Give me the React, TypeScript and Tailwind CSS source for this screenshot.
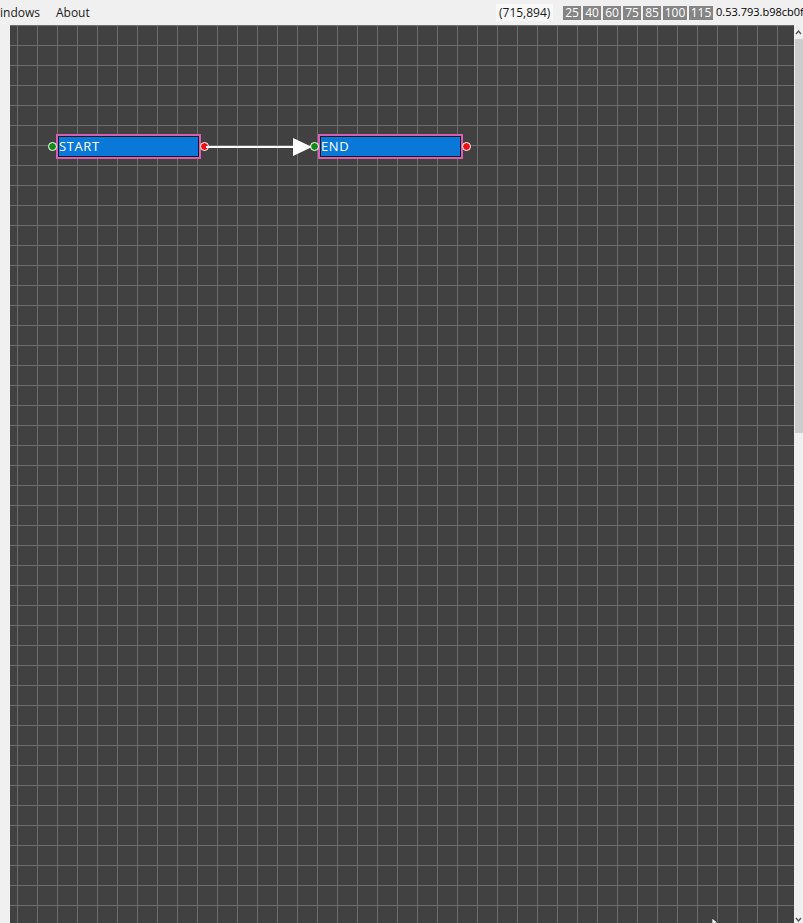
import React from 'react';

const zoomLevels = [
  { label: '25', w: 'w-[18px]' },
  { label: '40', w: 'w-[18px]' },
  { label: '60', w: 'w-[18px]' },
  { label: '75', w: 'w-[18px]' },
  { label: '85', w: 'w-[18px]' },
  { label: '100', w: 'w-[24px]' },
  { label: '115', w: 'w-[24px]' },
];

type NodeProps = { label: string; x: number; y: number };

function FlowNode({ label, x, y }: NodeProps) {
  return (
    <div className="absolute" style={{ left: x, top: y }}>
      <div className="relative h-[25px] w-[145px] border-2 border-[#d65fb4]">
        <div className="flex h-full w-full items-center border border-[#1b1b1b] bg-[#0a78d8] text-[13px] leading-none tracking-[0.6px] text-white [font-family:'Open_Sans',sans-serif]">
          {label}
        </div>
        {/* input / output ports */}
        <div className="absolute left-[-10px] top-[6px] h-[9px] w-[9px] rounded-full border border-white bg-[#138a13]" />
        <div className="absolute right-[-10px] top-[6px] h-[9px] w-[9px] rounded-full border border-white bg-[#ee1111]" />
      </div>
    </div>
  );
}

export default function App() {
  return (
    <div className="flex h-[923px] w-[803px] flex-col overflow-hidden bg-[#f0f0f0] [font-family:'Open_Sans',sans-serif]">
      {/* Top menu bar */}
      <div className="flex h-[25px] shrink-0 items-center overflow-hidden whitespace-nowrap text-[12px] text-[#1a1a1a]">
        <div className="flex w-[496px] shrink-0 gap-[16px]">
          <span>indows</span>
          <span>About</span>
        </div>
        <div className="w-[67px] shrink-0">
          <span className="bg-[#f8f8f8] px-[3px] text-[12px]">(715,894)</span>
        </div>
        <div className="flex shrink-0 gap-[2px]">
          {zoomLevels.map((z) => (
            <span
              key={z.label}
              className={`flex h-[14px] ${z.w} items-center justify-center bg-[#858585] text-[12px] leading-none text-white`}
            >
              {z.label}
            </span>
          ))}
        </div>
        <span className="ml-[3px] shrink-0 text-[11px] text-black">0.53.793.b98cb0f</span>
      </div>

      {/* Canvas area */}
      <div className="flex min-h-0 flex-1">
        <div className="w-[10px] shrink-0" />
        <div className="relative flex-1 bg-[#414141] bg-[linear-gradient(to_right,#6c6c6c_1px,transparent_1px),linear-gradient(to_bottom,#6c6c6c_1px,transparent_1px)] bg-[size:20px_20px] bg-[position:7px_0px]">
          <FlowNode label="START" x={46} y={109} />
          <FlowNode label="END" x={308} y={109} />
          <svg className="absolute left-[196px] top-[110px]" width="115" height="24" viewBox="0 0 115 24">
            <line x1="0" y1="12" x2="90" y2="12" stroke="white" strokeWidth="2" />
            <polygon points="87,3 106,12 87,21" fill="white" />
          </svg>
          {/* mouse cursor */}
          <svg className="absolute left-[702px] top-[893px]" width="8" height="8" viewBox="0 0 8 8">
            <polygon points="0,0 0,7 2,5 4,8 5,7 3,5 6,5" fill="white" stroke="black" strokeWidth="0.6" />
          </svg>
        </div>
        {/* Vertical scrollbar */}
        <div className="flex w-[9px] shrink-0 flex-col bg-[#f0f0f0]">
          <div className="flex h-[14px] items-center justify-center">
            <svg width="7" height="7" viewBox="0 0 7 7">
              <path d="M1 5 L3.5 2 L6 5" stroke="#505050" strokeWidth="1.3" fill="none" />
            </svg>
          </div>
          <div className="ml-[1px] h-[394px] bg-[#cdcdcd]" />
          <div className="flex-1" />
          <div className="flex h-[8px] items-center justify-center">
            <svg width="7" height="7" viewBox="0 0 7 7">
              <path d="M1 2 L3.5 5 L6 2" stroke="#505050" strokeWidth="1.3" fill="none" />
            </svg>
          </div>
        </div>
      </div>
    </div>
  );
}
